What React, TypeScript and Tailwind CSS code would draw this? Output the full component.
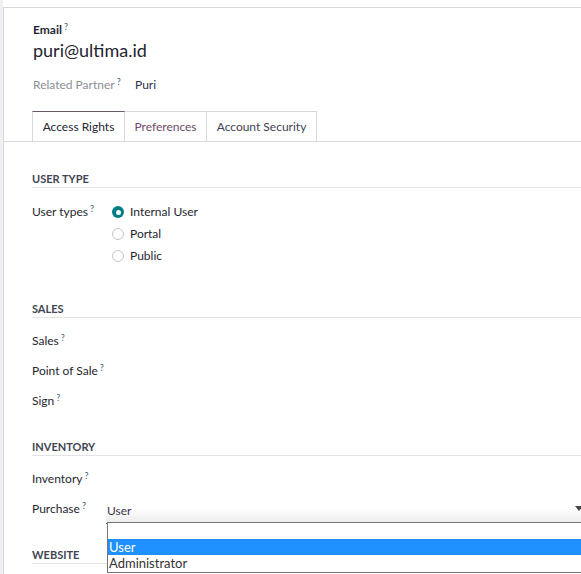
import { useState } from "react";

const font = { fontFamily: "Lato, 'Noto Sans', sans-serif" };

function Help() {
  return <sup className="ml-[2px] text-[9px] font-normal text-[#40606e]">?</sup>;
}

function SectionTitle({ title }: { title: string }) {
  return (
    <div className="border-b border-[#e2e4e7] text-[11px] font-bold uppercase leading-[16px] text-[#3f4552]">
      {title}
    </div>
  );
}

function FieldRow({ label, children }: { label: string; children?: React.ReactNode }) {
  return (
    <div className="flex h-[30px] items-center">
      <div className="w-[74px] shrink-0 whitespace-nowrap text-[12px] leading-[30px] text-[#1f2630]">
        {label}
        <Help />
      </div>
      <div className="flex-1">{children}</div>
    </div>
  );
}

function Radio({ checked, label }: { checked?: boolean; label: string }) {
  return (
    <div className="flex h-[22px] items-center gap-[6px]">
      {checked ? (
        <span className="flex h-[12px] w-[12px] items-center justify-center rounded-full bg-[#017e84]">
          <span className="h-[5px] w-[5px] rounded-full bg-white" />
        </span>
      ) : (
        <span className="h-[12px] w-[12px] rounded-full border border-[#c4c7cb] bg-white" />
      )}
      <span className="text-[12px] text-[#1f2630]">{label}</span>
    </div>
  );
}

export default function App() {
  const [tab] = useState("access");
  const tabs = [
    { id: "access", label: "Access Rights", w: "w-[93px]", color: "text-[#1f2630]" },
    { id: "prefs", label: "Preferences", w: "w-[82px]", color: "text-[#714b67]" },
    { id: "security", label: "Account Security", w: "w-[110px]", color: "text-[#3f4356]" },
  ];

  return (
    <div className="flex min-h-[574px] bg-white" style={font}>
      <div className="w-[3px] shrink-0 bg-[#eff0f2]" />
      <div className="flex-1 pt-[7px]">
        <div className="relative h-[567px] overflow-hidden border-l border-t border-[#d7d9dc] bg-white">
          <div className="pl-[29px] pt-[14px]">
            <div className="text-[12px] font-bold leading-[16px] text-[#1f2630]">
              Email
              <Help />
            </div>
            <div className="mt-[2px] text-[18px] leading-[20px] text-[#1f2630]">puri@ultima.id</div>
            <div className="mt-[15px] flex text-[12px] leading-[20px]">
              <div className="w-[102px] text-[#8a8f96]">
                Related Partner
                <Help />
              </div>
              <div className="text-[#2b3445]">Puri</div>
            </div>
          </div>

          <div className="mt-[16px] flex border-b border-[#d7d9dc] pl-[28px]">
            {tabs.map((t) => (
              <div
                key={t.id}
                className={`${t.w} h-[30px] border-r border-t text-center text-[12px] leading-[29px] ${t.color} ${
                  t.id === tab ? "border-l border-t-[#6a5a67] border-[#d7d9dc] bg-white" : "border-[#d7d9dc]"
                }`}
              >
                {t.label}
              </div>
            ))}
          </div>

          <div className="pl-[28px]">
            <div className="mt-[29px]">
              <SectionTitle title="User Type" />
            </div>
            <div className="mt-[13px] flex">
              <div className="w-[80px] shrink-0 text-[12px] leading-[22px] text-[#1f2630]">
                User types
                <Help />
              </div>
              <div>
                <Radio checked label="Internal User" />
                <Radio label="Portal" />
                <Radio label="Public" />
              </div>
            </div>

            <div className="mt-[34px]">
              <SectionTitle title="Sales" />
            </div>
            <div className="mt-[8px]">
              <FieldRow label="Sales" />
              <FieldRow label="Point of Sale" />
              <FieldRow label="Sign" />
            </div>

            <div className="mt-[23px]">
              <SectionTitle title="Inventory" />
            </div>
            <div className="mt-[8px]">
              <FieldRow label="Inventory" />
              <div className="flex h-[30px] items-center">
                <div className="w-[74px] shrink-0 whitespace-nowrap text-[12px] leading-[30px] text-[#1f2630]">
                  Purchase
                  <Help />
                </div>
                <div className="relative -mr-[3px] flex-1 self-stretch">
                  <div className="flex h-full items-center justify-between border-b border-[#017e84] bg-gradient-to-b from-white from-50% to-[#ececec] pl-[1px] pr-[1px]">
                    <span className="pt-[5px] text-[12px] text-[#3e3550]">User</span>
                    <span className="h-0 w-0 border-x-[4px] border-t-[5px] border-x-transparent border-t-[#444]" />
                  </div>
                </div>
              </div>
            </div>

            <div className="mt-[23px]">
              <SectionTitle title="Website" />
            </div>
          </div>

          <div className="absolute left-[103px] right-[-4px] top-[514px] z-10 border border-[#767676] bg-white text-[13px] leading-[16px]">
            <div className="h-[16px]" />
            <div className="h-[16px] bg-[#1e90ff] pl-[1px] text-white">User</div>
            <div className="h-[17px] pl-[1px] text-[#333]">Administrator</div>
          </div>
        </div>
      </div>
    </div>
  );
}
